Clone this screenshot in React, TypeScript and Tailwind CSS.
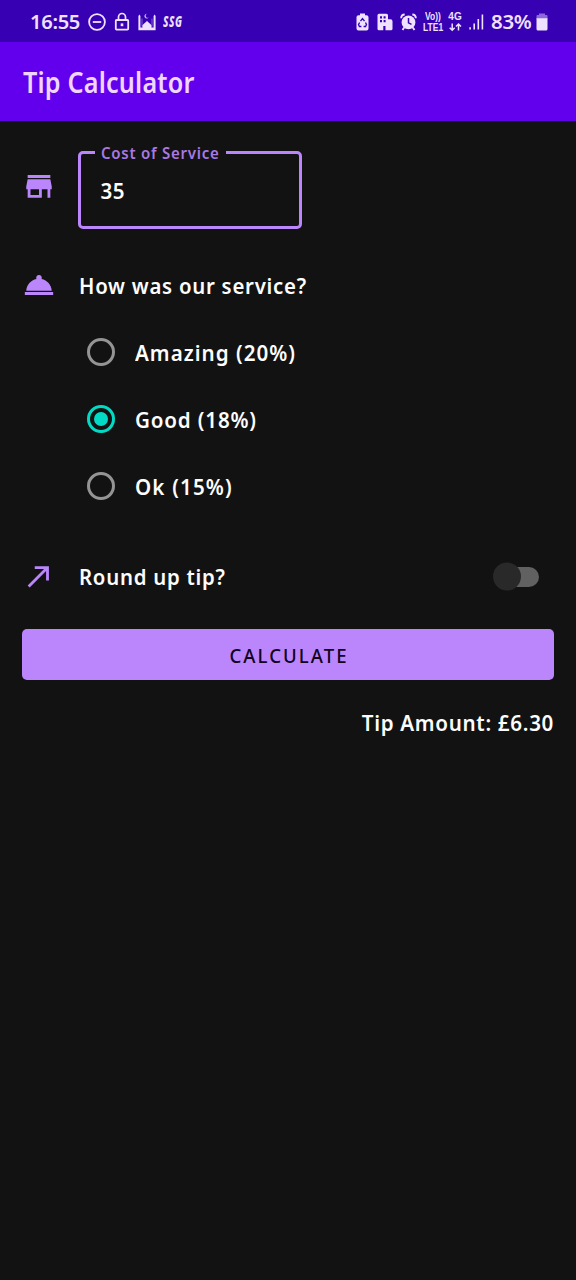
import type { ReactNode } from "react";

const options = [
  { label: "Amazing (20%)", spacing: "tracking-[1.100px]", selected: false },
  { label: "Good (18%)", spacing: "tracking-[0.900px]", selected: true },
  { label: "Ok (15%)", spacing: "tracking-[1.250px]", selected: false },
];

function StatusIcon({ w, h = 20, className = "", children }: { w: number; h?: number; className?: string; children: ReactNode }) {
  return (
    <svg width={w} height={h} viewBox={`0 0 ${w} ${h}`} className={`shrink-0 ${className}`} fill="currentColor">
      {children}
    </svg>
  );
}

function StatusBar() {
  return (
    <div className="flex h-[42px] items-center bg-[#3700b3] pl-[30px] pr-[28px] pt-px text-[#efe2ff]">
      <span className="w-[50px] origin-left scale-x-[.98] whitespace-nowrap text-[20.500px] font-semibold leading-none tracking-[-0.300px]">16:55</span>
      <StatusIcon w={18} className="ml-[8px]">
        <circle cx="9" cy="10" r="7.9" fill="none" stroke="currentColor" strokeWidth="1.8" />
        <path d="M4.800 9.100h8.400v1.800H4.800z" />
      </StatusIcon>
      <StatusIcon w={16} className="ml-[8.300px]">
        <path d="M4.500 8V5a3.500 3.500 0 0 1 7 0V8" fill="none" stroke="currentColor" strokeWidth="1.700" />
        <rect x="1.800" y="8" width="12.400" height="9.600" rx=".8" fill="none" stroke="currentColor" strokeWidth="1.800" />
        <rect x="6.700" y="11.400" width="2.600" height="2.800" />
      </StatusIcon>
      <StatusIcon w={18} className="ml-[8.200px]">
        <path d="M.4 4 1.400 2.500 2.400 4V15.500H4.600c-1.300-3.200 2.600-4.200 4.400-6.800 1.800 2.600 5.700 3.600 4.400 6.800h2.200V4l1-1.500 1 1.500v14.200H.4z" />
        <path d="M3.600 6.500h.8v8h-.8zM13.600 6.500h.8v8h-.8z" opacity=".5" />
        <path d="M8.800 1.800a2.400 2.400 0 1 0 2 3.700 2 2 0 0 1-2-3.700z" opacity=".8" />
      </StatusIcon>
      <span className="ml-[7px] origin-left scale-x-[.65] whitespace-nowrap text-[15.500px] font-extrabold italic leading-none tracking-[0.800px]">SSG</span>

      <div className="ml-auto flex items-center">
        <StatusIcon w={13}>
          <path d="M4 1.500h5v1.700h1.500A2 2 0 0 1 12.500 5v11.500a2 2 0 0 1-2 2h-8a2 2 0 0 1-2-2V5a2 2 0 0 1 2-1.800H4z" />
          <path d="M4.500 9.200 6.500 6.500l2 2.700M9.500 10.500l1 2.100-.9 1.900H7.600M5.400 14.500H3.400l-.9-1.900 1.100-2.100" fill="none" stroke="#3700b3" strokeWidth="1.300" />
        </StatusIcon>
        <StatusIcon w={16} className="ml-[8px]">
          <path fillRule="evenodd" d="M2 1.800h7.500A1.500 1.500 0 0 1 11 3.300V7.300h2.500a2 2 0 0 1 2 2v7.400a1.500 1.500 0 0 1-1.500 1.500H8.500V14H6.300v4.200H2A1.500 1.500 0 0 1 .5 16.700V3.300A1.500 1.500 0 0 1 2 1.800zM3 4.200v2.200h2V4.200zm3.600 0v2.200h2V4.200zM3 8v2.200h2V8zm3.600 0v2.200h2V8z" />
        </StatusIcon>
        <StatusIcon w={17} className="ml-[7.500px]">
          <circle cx="8.500" cy="10.400" r="6.900" />
          <path d="M1.200 6.200C1.200 4 2.600 2.600 4.700 2.500M15.800 6.200c0-2.200-1.400-3.600-3.500-3.700M4.200 15.400l-1.700 2.600M12.800 15.400l1.700 2.600" fill="none" stroke="currentColor" strokeWidth="1.900" />
          <path d="M8.500 6v4.800l3 1.500" fill="none" stroke="#3700b3" strokeWidth="1.500" />
        </StatusIcon>
        <div className="ml-[6px] mt-px flex w-[21px] flex-col font-['Liberation_Sans',sans-serif] text-[10px] font-bold leading-[10px]">
          <span className="ml-[2px] origin-left scale-x-[.85] whitespace-nowrap">Vo))</span>
          <span className="mt-px origin-left scale-x-[.85] whitespace-nowrap">LTE1</span>
        </div>
        <div className="ml-[4px] flex w-[14px] flex-col items-center">
          <span className="font-['Liberation_Sans',sans-serif] text-[10px] font-bold leading-[10px]">4G</span>
          <StatusIcon w={13} h={10}>
            <path d="M3.200 1.500v6.500M.7 5.700l2.500 2.500 2.500-2.500M9.500 8.500V2.200M7 4.500 9.500 2 12 4.500" fill="none" stroke="currentColor" strokeWidth="1.500" />
          </StatusIcon>
        </div>
        <StatusIcon w={15} className="ml-[6.500px]">
          <path d="M.3 15.200h1.600V17.600H.3zM4.400 11.500h1.600v6.100H4.400zM8.500 7h1.600v10.600H8.500zM12.600 2.500h1.600v15.100h-1.600z" />
        </StatusIcon>
        <span className="ml-[7.500px] w-[42px] whitespace-nowrap text-[20.500px] font-semibold leading-none tracking-[-0.300px]">83%</span>
        <StatusIcon w={12} className="ml-[2.500px] mr-[0.500px]">
          <path d="M3 1.500h6V3h1.500a1 1 0 0 1 1 1V7H.5V4a1 1 0 0 1 1-1H3z" fill="#8d68d8" />
          <path d="M.5 6.200h11v10.800A1.500 1.500 0 0 1 10 18.500H2A1.500 1.500 0 0 1 .5 17z" />
        </StatusIcon>
      </div>
    </div>
  );
}

function Radio({ selected }: { selected: boolean }) {
  return (
    <span className={`flex size-[28px] items-center justify-center rounded-full border-[3px] ${selected ? "border-[#03dac5]" : "border-[#949494]"}`}>
      {selected && <span className="size-[14px] rounded-full bg-[#03dac5]" />}
    </span>
  );
}

export default function App() {
  return (
    <div className="min-h-[1280px] w-[576px] bg-[#121212] font-['Noto_Sans',sans-serif] font-semibold text-[#fdfdfd]">
      <StatusBar />
      <header className="flex h-[79px] items-center bg-[#6200ee] pl-[22.500px] pt-px">
        <h1 className="origin-left scale-x-[.9] whitespace-nowrap text-[28px] font-semibold leading-none tracking-[0.200px] text-[#f0d6ff]">Tip Calculator</h1>
      </header>

      <main className="flex flex-col pl-[22px] pr-[22px] text-[22.400px]">
        <div className="mt-[22px] flex h-[86px] items-center">
          <svg width="34" height="34" viewBox="0 0 24 24" fill="#bb86fc">
            <path d="M20 4H4v2h16V4zm1 10v-2l-1-5H4l-1 5v2h1v6h10v-6h4v6h2v-6h1zm-9 4H6v-4h6v4z" transform="translate(0 .3)" />
          </svg>
          <fieldset className="ml-[22px] h-[86px] w-[224px] rounded-[5px] border-[3px] border-[#bb86fc] pl-[14px]">
            <legend className="h-[18px] w-[131px] whitespace-nowrap pl-[5.500px] text-[16.500px] font-semibold leading-[19px] text-[#a878e4]">
              <span className="block origin-left scale-x-[.91] tracking-[0.820px]">Cost of Service</span>
            </legend>
            <div className="origin-left scale-x-[.92] pl-[6px] pt-[16px] leading-[28px] tracking-[0.600px]">35</div>
          </fieldset>
        </div>

        <div className="mt-[41px] flex h-[30px] items-center">
          <svg width="34" height="34" viewBox="0 0 24 24" fill="#bb86fc">
            <path d="M2 17h20v2H2zm11.840-9.210A2.006 2.006 0 0 0 12 5a2.006 2.006 0 0 0-1.840 2.790C6.250 8.600 3.270 11.930 3 16h18c-.27-4.070-3.250-7.400-7.160-8.210z" />
          </svg>
          <span className="ml-[22.500px] origin-left scale-x-[.91] whitespace-nowrap pt-[2px] leading-[30px] tracking-[0.820px]">How was our service?</span>
        </div>

        <div className="ml-[64.500px] mt-[18px] flex flex-col">
          {options.map((o) => (
            <div key={o.label} className="flex h-[67.200px] items-center gap-[20px]">
              <Radio selected={o.selected} />
              <span className={`origin-left scale-x-[.92] whitespace-nowrap pt-[2px] ${o.spacing}`}>{o.label}</span>
            </div>
          ))}
        </div>

        <div className="mt-[39.400px] flex h-[36px] items-center">
          <svg width="34" height="34" viewBox="0 0 24 24" fill="#bb86fc">
            <path d="M9 5v2h6.590L4 18.590 5.410 20 17 8.410V15h2V5z" transform="translate(0 -.6)" />
          </svg>
          <span className="ml-[22.500px] origin-left scale-x-[.91] whitespace-nowrap tracking-[0.820px]">Round up tip?</span>
          <span className="ml-auto mr-[15.500px] flex h-[20px] w-[38.500px] items-center rounded-full bg-[#616161]">
            <span className="-ml-[7px] size-[28px] -translate-y-[0.500px] rounded-full bg-[#292929]" />
          </span>
        </div>

        <button className="mt-[34px] h-[51px] w-full rounded-[5px] bg-[#bb86fc] pt-[3px] text-[20px] font-medium text-[#120020]">
          <span className="ml-[2px] inline-block scale-x-[.93] tracking-[2.200px]">CALCULATE</span>
        </button>
        <div className="mt-[28px] flex justify-end leading-[30px]">
          <span className="origin-right scale-x-[.92] whitespace-nowrap tracking-[0.750px]">Tip Amount: £6.30</span>
        </div>
      </main>
    </div>
  );
}
